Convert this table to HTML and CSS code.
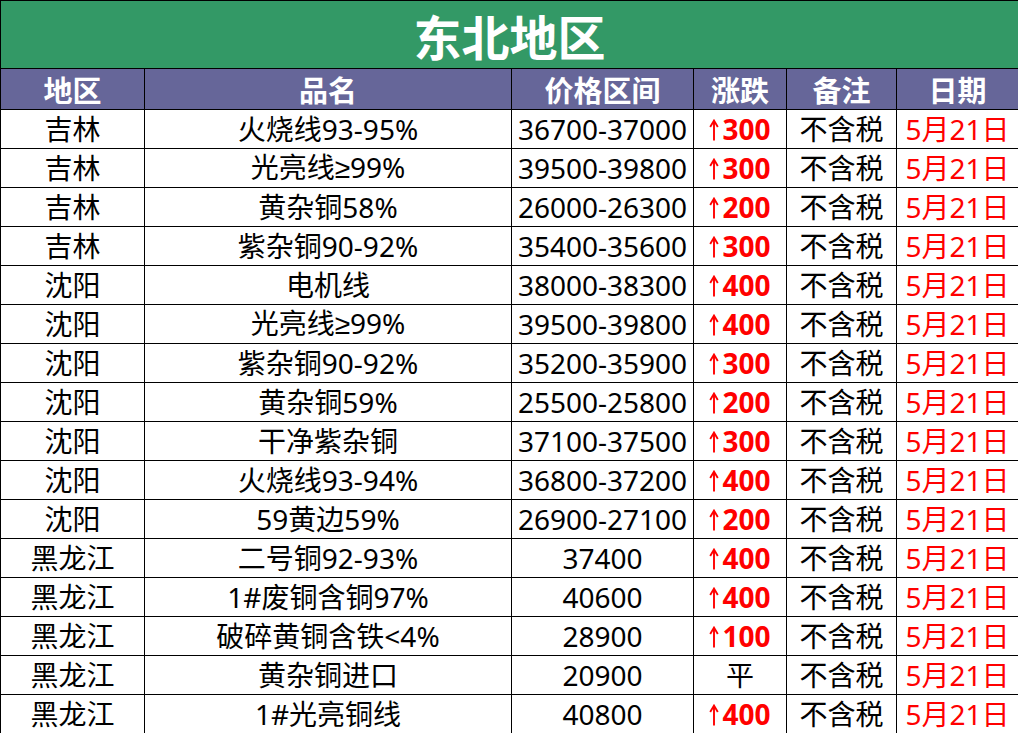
FILE: index.html
```html
<!DOCTYPE html>
<html lang="zh">
<head>
<meta charset="utf-8">
<link rel="stylesheet" href="styles.css">
</head>
<body>
<svg class="defs" width="0" height="0" aria-hidden="true">
  <symbol id="up" viewBox="0 0 10 22">
    <path d="M5 2.5V21.5M1.2 8L5 1.6L8.8 8" fill="none" stroke="#ff0000" stroke-width="1.9" stroke-linecap="butt" stroke-linejoin="miter"/>
  </symbol>
</svg>
<table class="sheet">
  <colgroup>
    <col class="c1"><col class="c2"><col class="c3"><col class="c4"><col class="c5"><col class="c6">
  </colgroup>
  <thead>
    <tr class="title-row"><th colspan="6">东北地区</th></tr>
    <tr class="head-row"><th>地区</th><th>品名</th><th>价格区间</th><th>涨跌</th><th>备注</th><th>日期</th></tr>
  </thead>
  <tbody>
    <tr><td>吉林</td><td>火烧线93-95%</td><td>36700-37000</td><td class="up"><svg class="arr"><use href="#up"/></svg>300</td><td>不含税</td><td class="date">5月21日</td></tr>
    <tr><td>吉林</td><td>光亮线<span class="ge">≥</span>99%</td><td>39500-39800</td><td class="up"><svg class="arr"><use href="#up"/></svg>300</td><td>不含税</td><td class="date">5月21日</td></tr>
    <tr><td>吉林</td><td>黄杂铜58%</td><td>26000-26300</td><td class="up"><svg class="arr"><use href="#up"/></svg>200</td><td>不含税</td><td class="date">5月21日</td></tr>
    <tr><td>吉林</td><td>紫杂铜90-92%</td><td>35400-35600</td><td class="up"><svg class="arr"><use href="#up"/></svg>300</td><td>不含税</td><td class="date">5月21日</td></tr>
    <tr><td>沈阳</td><td>电机线</td><td>38000-38300</td><td class="up"><svg class="arr"><use href="#up"/></svg>400</td><td>不含税</td><td class="date">5月21日</td></tr>
    <tr><td>沈阳</td><td>光亮线<span class="ge">≥</span>99%</td><td>39500-39800</td><td class="up"><svg class="arr"><use href="#up"/></svg>400</td><td>不含税</td><td class="date">5月21日</td></tr>
    <tr><td>沈阳</td><td>紫杂铜90-92%</td><td>35200-35900</td><td class="up"><svg class="arr"><use href="#up"/></svg>300</td><td>不含税</td><td class="date">5月21日</td></tr>
    <tr><td>沈阳</td><td>黄杂铜59%</td><td>25500-25800</td><td class="up"><svg class="arr"><use href="#up"/></svg>200</td><td>不含税</td><td class="date">5月21日</td></tr>
    <tr><td>沈阳</td><td>干净紫杂铜</td><td>37100-37500</td><td class="up"><svg class="arr"><use href="#up"/></svg>300</td><td>不含税</td><td class="date">5月21日</td></tr>
    <tr><td>沈阳</td><td>火烧线93-94%</td><td>36800-37200</td><td class="up"><svg class="arr"><use href="#up"/></svg>400</td><td>不含税</td><td class="date">5月21日</td></tr>
    <tr><td>沈阳</td><td>59黄边59%</td><td>26900-27100</td><td class="up"><svg class="arr"><use href="#up"/></svg>200</td><td>不含税</td><td class="date">5月21日</td></tr>
    <tr><td>黑龙江</td><td>二号铜92-93%</td><td>37400</td><td class="up"><svg class="arr"><use href="#up"/></svg>400</td><td>不含税</td><td class="date">5月21日</td></tr>
    <tr><td>黑龙江</td><td>1#废铜含铜97%</td><td>40600</td><td class="up"><svg class="arr"><use href="#up"/></svg>400</td><td>不含税</td><td class="date">5月21日</td></tr>
    <tr><td>黑龙江</td><td>破碎黄铜含铁&lt;4%</td><td>28900</td><td class="up"><svg class="arr"><use href="#up"/></svg>100</td><td>不含税</td><td class="date">5月21日</td></tr>
    <tr><td>黑龙江</td><td>黄杂铜进口</td><td>20900</td><td>平</td><td>不含税</td><td class="date">5月21日</td></tr>
    <tr><td>黑龙江</td><td>1#光亮铜线</td><td>40800</td><td class="up"><svg class="arr"><use href="#up"/></svg>400</td><td>不含税</td><td class="date">5月21日</td></tr>
  </tbody>
</table>
</body>
</html>
```
FILE: styles.css
```css
html, body {
  margin: 0;
  padding: 0;
  background: #ffffff;
}
body {
  font-family: "Noto Sans", "Noto Sans CJK SC", sans-serif;
  color: #000;
}
.defs {
  position: absolute;
  width: 0;
  height: 0;
  overflow: hidden;
}
.sheet {
  border-collapse: collapse;
  table-layout: fixed;
  width: 1018px;
}
.c1 { width: 144px; }
.c2 { width: 367px; }
.c3 { width: 182px; }
.c4 { width: 93px; }
.c5 { width: 110px; }
.c6 { width: 122px; }
.sheet th, .sheet td {
  border: 1px solid #000;
  padding: 0;
  text-align: center;
  white-space: nowrap;
  overflow: hidden;
  line-height: 1;
}
.title-row th {
  background: #339966;
  color: #fff;
  font-family: "Noto Sans CJK SC", sans-serif;
  font-weight: 700;
  font-size: 48px;
  height: 67px;
}
.head-row th {
  background: #666699;
  color: #fff;
  font-family: "Noto Sans CJK SC", sans-serif;
  font-weight: 700;
  font-size: 29px;
  height: 40px;
}
.sheet tbody td {
  height: 38px;
  font-size: 28px;
}
.up {
  color: #ff0000;
  font-weight: 700;
}
.arr {
  width: 10px;
  height: 22px;
  margin-right: 3px;
  vertical-align: -1px;
}
.ge {
  font-family: "Liberation Sans", sans-serif;
}
.date {
  color: #ff0000;
}
```
